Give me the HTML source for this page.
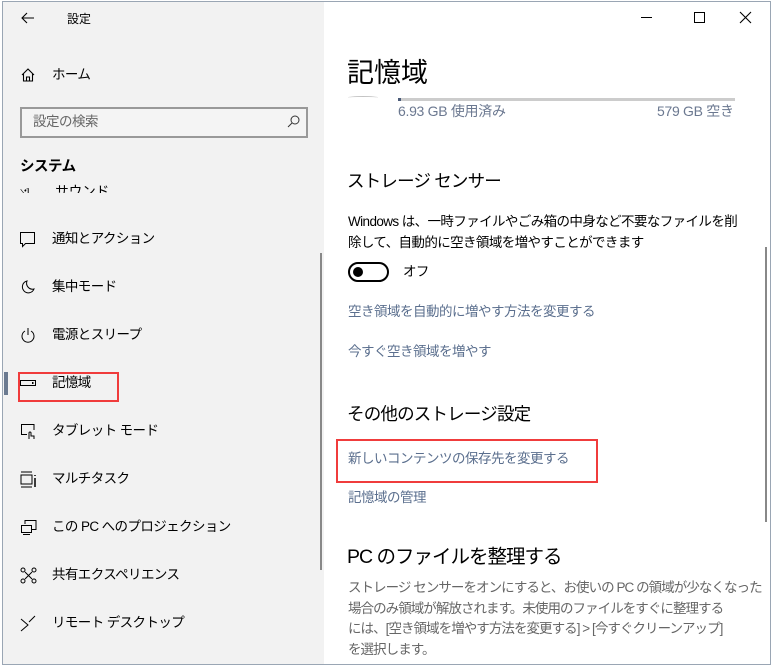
<!DOCTYPE html>
<html><head><meta charset="utf-8"><style>
*{margin:0;padding:0;box-sizing:border-box}
body{width:773px;height:670px;overflow:hidden;background:#fff;font-family:"Liberation Sans","Noto Sans CJK JP",sans-serif;color:#000;position:relative}
.a{position:absolute;white-space:nowrap}
#frame{position:absolute;left:2px;top:1px;width:769px;height:664px;border:1px solid #9aa6b4}
#left{position:absolute;left:3px;top:2px;width:321px;height:662px;background:#f2f2f2}
.nav{font-size:13.5px;color:#000;line-height:20px;letter-spacing:-0.6px}
.lk{font-size:13.5px;color:#5b6f8e;line-height:20px;letter-spacing:-0.5px}
svg{position:absolute}
</style></head><body>
<div id="frame"></div>
<div id="left"></div>
<svg style="left:20px;top:10px" width="16" height="16" viewBox="0 0 16 16"><path d="M14 8H2M7 3L2 8l5 5" stroke="#000" fill="none" stroke-width="1.1"/></svg>
<div class="a" style="left:67px;top:10px;font-size:12px">設定</div>
<div class="a" style="left:641px;top:17px;width:11px;height:1px;background:#000"></div>
<div class="a" style="left:694px;top:12px;width:11px;height:11px;border:1px solid #000"></div>
<svg style="left:739px;top:11px" width="13" height="13"><path d="M1 1L12 12M12 1L1 12" stroke="#000" stroke-width="1.1"/></svg>

<svg style="left:20px;top:67px" width="16" height="16" viewBox="0 0 16 16"><path d="M2 8L8 2l6 6M3.5 7v7h9V7M6.5 14v-4h3v4" stroke="#000" fill="none" stroke-width="1.1"/></svg>
<div class="a nav" style="left:52px;top:65px">ホーム</div>
<div class="a" style="left:20px;top:107px;width:288px;height:31px;border:2px solid #999;background:#f4f4f4"></div>
<div class="a" style="left:33px;top:112px;font-size:13.5px;color:#666;line-height:20px;letter-spacing:-0.5px">設定の検索</div>
<svg style="left:287px;top:115px" width="13" height="13"><circle cx="8" cy="5" r="4" stroke="#333" fill="none"/><path d="M5 8L1 12" stroke="#333"/></svg>
<div class="a" style="left:20px;top:157px;font-size:14.5px;font-weight:bold;line-height:20px;letter-spacing:-0.5px">システム</div>
<div class="a" style="left:20px;top:184px;height:9px;overflow:hidden;font-size:13.5px;line-height:20px;width:120px"><div style="margin-top:-2px">ଏ <span style="margin-left:22px">サウンド</span></div></div>

<svg style="left:19px;top:231px" width="17" height="17"><path d="M1.5 1.5h14v11h-9l-3 3v-3h-2z" stroke="#000" fill="none"/></svg>
<div class="a nav" style="left:52px;top:229px">通知とアクション</div>
<svg style="left:20px;top:279px" width="16" height="16"><path d="M7 2a6 6 0 1 0 7 8A6 6 0 0 1 7 2z" stroke="#000" fill="none"/></svg>
<div class="a nav" style="left:52px;top:277px">集中モード</div>
<svg style="left:20px;top:327px" width="16" height="16"><path d="M5 4a6 6 0 1 0 6 0M8 1v7" stroke="#000" fill="none"/></svg>
<div class="a nav" style="left:52px;top:325px">電源とスリープ</div>

<div class="a" style="left:4px;top:372px;width:4px;height:23px;background:#6b7a90"></div>
<div class="a" style="left:18px;top:372px;width:101px;height:30px;border:2px solid #f03c3c"></div>
<svg style="left:20px;top:378px" width="16" height="10"><rect x="0.5" y="2.5" width="15" height="5" stroke="#000" fill="none"/><rect x="12" y="4" width="1.5" height="2" fill="#000"/></svg>
<div class="a nav" style="left:52px;top:373px">記憶域</div>
<svg style="left:20px;top:423px" width="17" height="17"><path d="M14 7V1.5H1.5v10H7" stroke="#000" fill="none"/><path d="M9 16v-6a1 1 0 0 1 2 0v3h3v3" stroke="#000" fill="none"/></svg>
<div class="a nav" style="left:52px;top:421px">タブレット モード</div>
<svg style="left:20px;top:471px" width="17" height="17"><path d="M1 1h11M1 16h11M1 4h11v9H1z" stroke="#000" fill="none"/><path d="M15 4v1M15 7v9" stroke="#000" stroke-width="1.5"/></svg>
<div class="a nav" style="left:52px;top:469px">マルチタスク</div>
<svg style="left:20px;top:519px" width="17" height="17"><path d="M5 5V1.5h11v9H12M1.5 6.5h10v7h-10zM3 15.5h7" stroke="#000" fill="none"/></svg>
<div class="a nav" style="left:52px;top:517px">この PC へのプロジェクション</div>
<svg style="left:20px;top:567px" width="17" height="17"><circle cx="3" cy="3" r="2" stroke="#000" fill="none"/><circle cx="14" cy="3" r="2" stroke="#000" fill="none"/><circle cx="3" cy="14" r="2" stroke="#000" fill="none"/><circle cx="14" cy="14" r="2" stroke="#000" fill="none"/><path d="M5 5l7 7M12 5l-7 7" stroke="#000"/></svg>
<div class="a nav" style="left:52px;top:565px">共有エクスペリエンス</div>
<svg style="left:20px;top:615px" width="17" height="17"><path d="M1 4l7 6-7 6M15 1L9 7" stroke="#000" fill="none"/></svg>
<div class="a nav" style="left:52px;top:613px">リモート デスクトップ</div>
<div class="a" style="left:320px;top:253px;width:2px;height:317px;background:#888"></div>

<div class="a" style="left:347px;top:56px;font-size:27px;line-height:34px">記憶域</div>
<div class="a" style="left:348px;top:96px;width:30px;height:3px;border-top:1px solid #888;border-radius:50%;opacity:.5"></div>
<div class="a" style="left:398px;top:98px;width:337px;height:3px;background:#ccc"></div>
<div class="a" style="left:398px;top:98px;width:3px;height:3px;background:#4a5a78"></div>
<div class="a" style="left:398px;top:101px;font-size:14px;color:#6b7890;line-height:20px;letter-spacing:-0.3px">6.93 GB 使用済み</div>
<div class="a" style="left:657px;top:101px;font-size:14px;color:#6b7890;line-height:20px;letter-spacing:-0.3px">579 GB 空き</div>
<div class="a" style="left:347px;top:169px;font-size:17.5px;line-height:24px;letter-spacing:-0.8px">ストレージ センサー</div>
<div class="a" style="left:348px;top:211px;font-size:13.5px;line-height:21px;letter-spacing:-0.6px">Windows は、一時ファイルやごみ箱の中身など不要なファイルを削<br>除して、自動的に空き領域を増やすことができます</div>
<div class="a" style="left:348px;top:262px;width:41px;height:20px;border:2px solid #000;border-radius:10px"></div>
<div class="a" style="left:353px;top:267px;width:10px;height:10px;border-radius:50%;background:#000"></div>
<div class="a nav" style="left:403px;top:262px">オフ</div>
<div class="a lk" style="left:348px;top:302px">空き領域を自動的に増やす方法を変更する</div>
<div class="a lk" style="left:348px;top:342px">今すぐ空き領域を増やす</div>
<div class="a" style="left:347px;top:402px;font-size:17.5px;line-height:24px;letter-spacing:-0.8px">その他のストレージ設定</div>
<div class="a" style="left:336px;top:439px;width:262px;height:44px;border:2px solid #f03c3c"></div>
<div class="a lk" style="left:348px;top:449px">新しいコンテンツの保存先を変更する</div>
<div class="a lk" style="left:348px;top:488px">記憶域の管理</div>
<div class="a" style="left:347px;top:543px;font-size:19.5px;line-height:28px;letter-spacing:-1px">PC のファイルを整理する</div>
<div class="a" style="left:348px;top:578px;font-size:13.5px;line-height:20.5px;color:#666;letter-spacing:-0.95px">ストレージ センサーをオンにすると、お使いの PC の領域が少なくなった<br>場合のみ領域が解放されます。未使用のファイルをすぐに整理する<br>には、[空き領域を増やす方法を変更する] &gt; [今すぐクリーンアップ]<br>を選択します。</div>
<div class="a" style="left:765px;top:247px;width:2px;height:275px;background:#888"></div>
</body></html>
